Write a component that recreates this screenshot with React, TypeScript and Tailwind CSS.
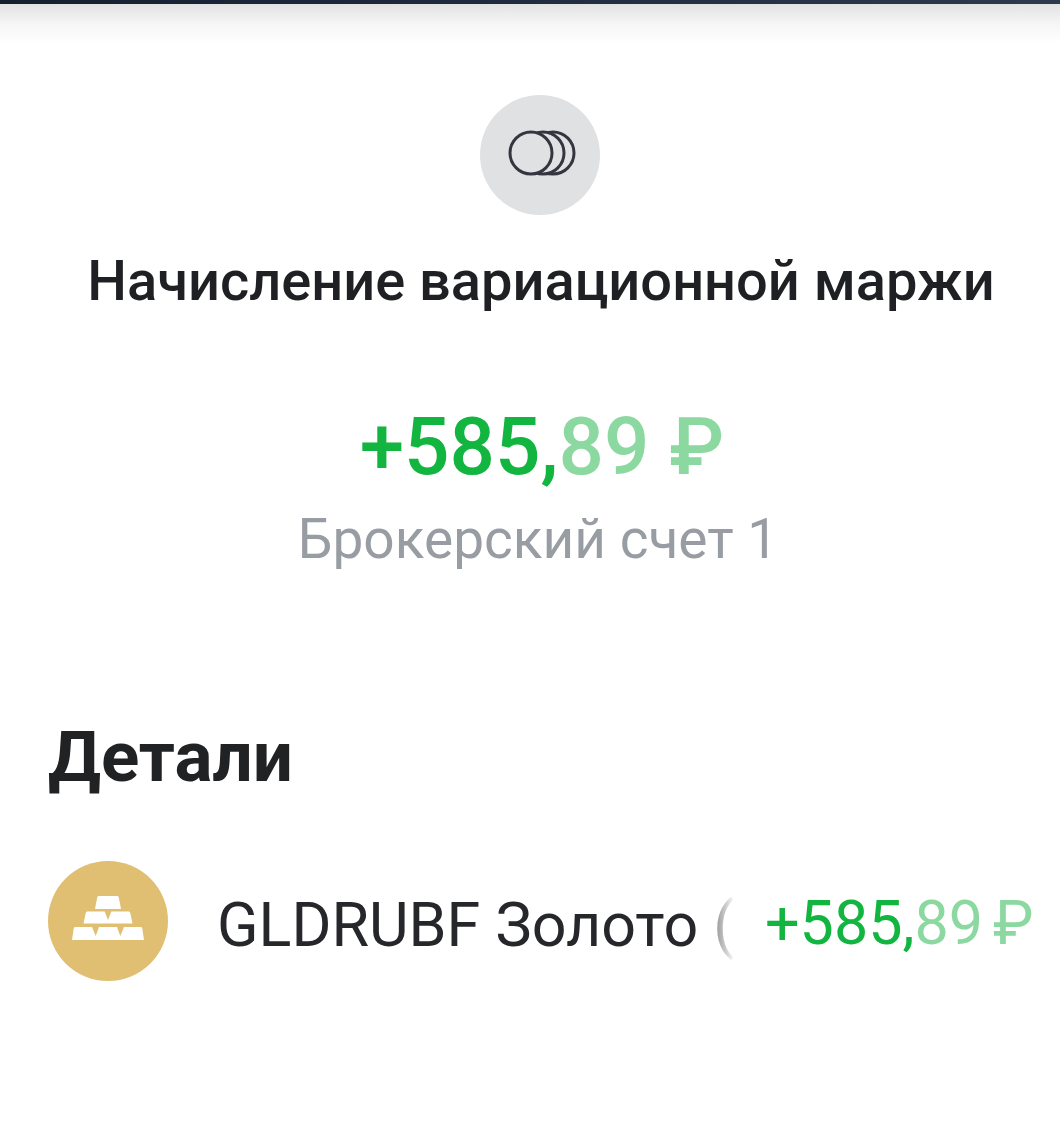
import React from "react";

const Amount: React.FC<{ className: string; gap: string }> = ({ className, gap }) => (
  <div className={`flex items-baseline whitespace-nowrap text-[#12b53f] ${className}`}>
    <span>+585,</span>
    <span className="text-[#8bd9a0]">89</span>
    <span className={`text-[#8bd9a0] ${gap}`}>₽</span>
  </div>
);

const CoinsIcon = () => (
  <svg className="mb-1 ml-1" width="68" height="46" viewBox="0 0 68 46" fill="none" stroke="#33363f" strokeWidth="3">
    <circle cx="45" cy="23" r="21" />
    <circle cx="35" cy="23" r="21" fill="#dfe1e3" />
    <circle cx="23" cy="23" r="21" fill="#dfe1e3" />
  </svg>
);

const GoldIcon = () => (
  <svg className="mb-1.5" width="72" height="44" viewBox="0 0 72 44" fill="#ffffff">
    <path d="M27 0H45C46 0 46.500 .5 46.800 1.500L49 13H23L25.200 1.500C25.500 .5 26 0 27 0Z" />
    <path d="M15.500 15.500H32.700L36 24L39.300 15.500H56.500C57.500 15.500 58 16 58.300 17L60.500 27.500H11.500L13.700 17C14 16 14.500 15.500 15.500 15.500Z" />
    <path d="M3.500 31H20L23.700 40L27 31H45L48.300 40L52 31H68.500C69.500 31 70 31.500 70.300 32.500L72 44H0L1.700 32.500C2 31.500 2.500 31 3.500 31Z" />
  </svg>
);

export default function App() {
  return (
    <div className="relative h-[1130px] w-[1060px] overflow-hidden bg-white font-['Roboto',sans-serif]">
      <div className="h-1 bg-gradient-to-r from-[#141f30] to-[#2c3a4b]" />
      <div className="h-10 bg-gradient-to-b from-[#e2e2e3] via-[#f6f6f6] to-white" />

      <div className="flex w-[1080px] flex-col items-center">
        <div className="mt-[51px] flex h-[120px] w-[120px] items-center justify-center rounded-full bg-[#dfe1e3]">
          <CoinsIcon />
        </div>
        <h1 className="mt-9 ml-0.5 text-[56px] leading-[61px] font-medium whitespace-nowrap text-[#1f2023]">
          Начисление вариационной маржи
        </h1>
        <Amount className="mt-[93px] ml-1 text-[80px] leading-[84px] font-medium" gap="ml-5" />
        <p className="mt-5 -ml-1 text-[55px] leading-[61px] text-[#989ca3]">Брокерский счет 1</p>
      </div>

      <div className="mt-[147px] px-12">
        <h2 className="text-[71px] leading-[80px] font-bold text-[#212224]">Детали</h2>
        <div className="mt-16 flex items-center">
          <div className="flex h-[120px] w-[120px] shrink-0 items-center justify-center rounded-full bg-[#e0bf72]">
            <GoldIcon />
          </div>
          <div className="relative ml-[49px] w-[518px] shrink-0 overflow-hidden pt-2">
            <div className="text-[61px] leading-[72px] whitespace-nowrap text-[#26272a]">GLDRUBF Золото (</div>
            <div className="absolute inset-y-0 right-0 w-10 bg-gradient-to-r from-transparent to-white" />
          </div>
          <Amount className="ml-[30px] pt-1 text-[61px] leading-[72px]" gap="ml-2.5" />
        </div>
      </div>
    </div>
  );
}
